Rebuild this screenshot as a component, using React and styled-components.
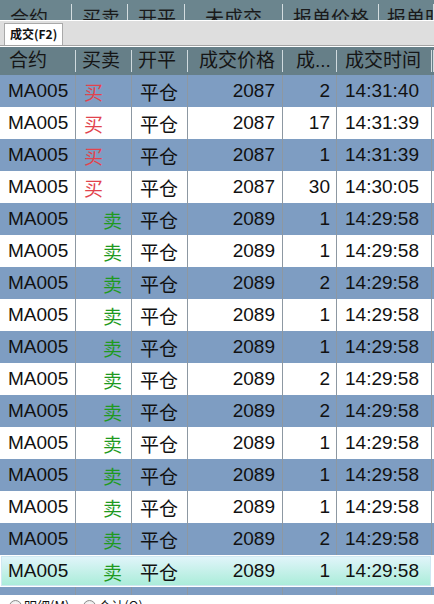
import React from "react";
import styled, { createGlobalStyle } from "styled-components";

const GlobalStyle = createGlobalStyle`
  body {
    margin: 0;
    background: #ffffff;
    font-family: "Liberation Sans", "Noto Sans CJK SC", sans-serif;
  }
`;

const Page = styled.div`
  width: 434px;
  height: 604px;
  overflow: hidden;
  background: #ffffff;
`;

const BackGrid = styled.div`
  height: 20px;
  overflow: hidden;
  background: #6b858e;
  display: grid;
  grid-template-columns: 72px 56px 57px 98px 96px 1fr;
`;

const BackHead = styled.div`
  margin-top: 4px;
  padding: 3px 0 0 ${(p) => p.$pad || 10}px;
  font-size: 19px;
  line-height: 24px;
  color: #1a1a1a;
  white-space: nowrap;
  overflow: hidden;
  border-right: 1px solid #d4dde0;
`;

const TabBar = styled.div`
  height: 24px;
  border-top: 1px solid #ffffff;
  border-bottom: 1px solid #a3a3a3;
  background: #dedede;
  display: flex;
  align-items: flex-end;
  padding-left: 4px;
  margin-bottom: 1px;
`;

const Tab = styled.div`
  height: 21px;
  padding: 0 5px;
  background: #ffffff;
  border: 1px solid #a9a9a9;
  border-bottom: none;
  font-family: "Noto Sans CJK SC", "Liberation Sans", sans-serif;
  font-size: 12px;
  font-weight: 700;
  line-height: 20px;
  color: #111111;
`;

const cols = "76px 56px 56px 95px 54px 95px 1fr";

const HeadRow = styled.div`
  height: 28px;
  background: #667f88;
  display: grid;
  grid-template-columns: ${cols};
  align-items: center;
`;

const HeadCell = styled.div`
  height: 22px;
  line-height: 22px;
  padding-left: ${(p) => p.$pad}px;
  font-size: 19px;
  color: #151515;
  white-space: nowrap;
  overflow: hidden;
  border-right: 1px solid #d0dade;
`;

const Row = styled.div`
  height: 32px;
  display: grid;
  grid-template-columns: ${cols};
  background: ${(p) => (p.$blue ? "#7e9dc2" : "#ffffff")};
  ${(p) =>
    p.$selected &&
    `
    background: linear-gradient(#e4f5fc, #a7ecd7);
    box-shadow: inset 0 0 0 1px #ffffff, inset 0 0 0 2px #cfe8f2;
    width: 432px;
  `}
`;

const Cell = styled.div`
  display: flex;
  align-items: center;
  justify-content: ${(p) => (p.$right ? "flex-end" : "flex-start")};
  padding: 0 ${(p) => p.$pr || 0}px 0 ${(p) => p.$pl || 0}px;
  font-size: 19px;
  color: ${(p) => p.$color || "#111111"};
  border-right: 1px solid ${(p) => (p.$noline ? "transparent" : "#8d98a2")};
  white-space: nowrap;
  overflow: hidden;
`;

const Partial = styled(Row)`
  height: 8px;
`;

const Footer = styled.div`
  display: flex;
  gap: 14px;
  padding: 3px 0 0 9px;
  align-items: flex-start;
`;

const Radio = styled.label`
  display: flex;
  align-items: flex-start;
  gap: 2px;
  font-family: "Noto Sans CJK SC", "Liberation Sans", sans-serif;
  font-size: 13px;
  line-height: 16px;
  color: #111111;
`;

const Dot = styled.span`
  margin-top: 2px;
  width: 11px;
  height: 11px;
  border-radius: 50%;
  border: 1px solid #8a8a8a;
  background: radial-gradient(circle at 50% 40%, #ffffff, #d8d8d8);
`;

const backHeads = [
  ["合约", 10],
  ["买卖", 10],
  ["开平", 10],
  ["未成交", 20],
  ["报单价格", 10],
  ["报单时间", 8],
];

const trades = [
  ["买", 2087, 2, "14:31:40"],
  ["买", 2087, 17, "14:31:39"],
  ["买", 2087, 1, "14:31:39"],
  ["买", 2087, 30, "14:30:05"],
  ["卖", 2089, 1, "14:29:58"],
  ["卖", 2089, 1, "14:29:58"],
  ["卖", 2089, 2, "14:29:58"],
  ["卖", 2089, 1, "14:29:58"],
  ["卖", 2089, 1, "14:29:58"],
  ["卖", 2089, 2, "14:29:58"],
  ["卖", 2089, 2, "14:29:58"],
  ["卖", 2089, 1, "14:29:58"],
  ["卖", 2089, 1, "14:29:58"],
  ["卖", 2089, 1, "14:29:58"],
  ["卖", 2089, 2, "14:29:58"],
  ["卖", 2089, 1, "14:29:58"],
];

export default function App() {
  return (
    <Page>
      <GlobalStyle />
      <BackGrid>
        {backHeads.map(([t, pad]) => (
          <BackHead key={t} $pad={pad}>
            {t}
          </BackHead>
        ))}
      </BackGrid>
      <TabBar>
        <Tab>成交(F2)</Tab>
      </TabBar>
      <HeadRow>
        <HeadCell $pad={9}>合约</HeadCell>
        <HeadCell $pad={6}>买卖</HeadCell>
        <HeadCell $pad={6}>开平</HeadCell>
        <HeadCell $pad={11}>成交价格</HeadCell>
        <HeadCell $pad={13}>成...</HeadCell>
        <HeadCell $pad={8}>成交时间</HeadCell>
        <HeadCell $pad={0} />
      </HeadRow>
      {trades.map(([side, price, qty, time], i) => {
        const sel = i === trades.length - 1;
        const buy = side === "买";
        return (
          <Row key={i} $blue={i % 2 === 0} $selected={sel}>
            <Cell $pl={8} $noline={sel}>MA005</Cell>
            <Cell
              $pl={8}
              $pr={9}
              $right={!buy}
              $color={buy ? "#e2434d" : "#1f9a1f"}
              $noline={sel}
            >
              {side}
            </Cell>
            <Cell $pl={8} $noline={sel}>平仓</Cell>
            <Cell $right $pr={7} $noline={sel}>{price}</Cell>
            <Cell $right $pr={6} $noline={sel}>{qty}</Cell>
            <Cell $pl={8} $noline={sel}>{time}</Cell>
            <Cell $noline />
          </Row>
        );
      })}
      <Partial $blue>
        <Cell />
        <Cell />
        <Cell />
        <Cell />
        <Cell />
        <Cell />
        <Cell $noline />
      </Partial>
      <Footer>
        <Radio>
          <Dot />
          明细(M)
        </Radio>
        <Radio>
          <Dot />
          合计(O)
        </Radio>
      </Footer>
    </Page>
  );
}
